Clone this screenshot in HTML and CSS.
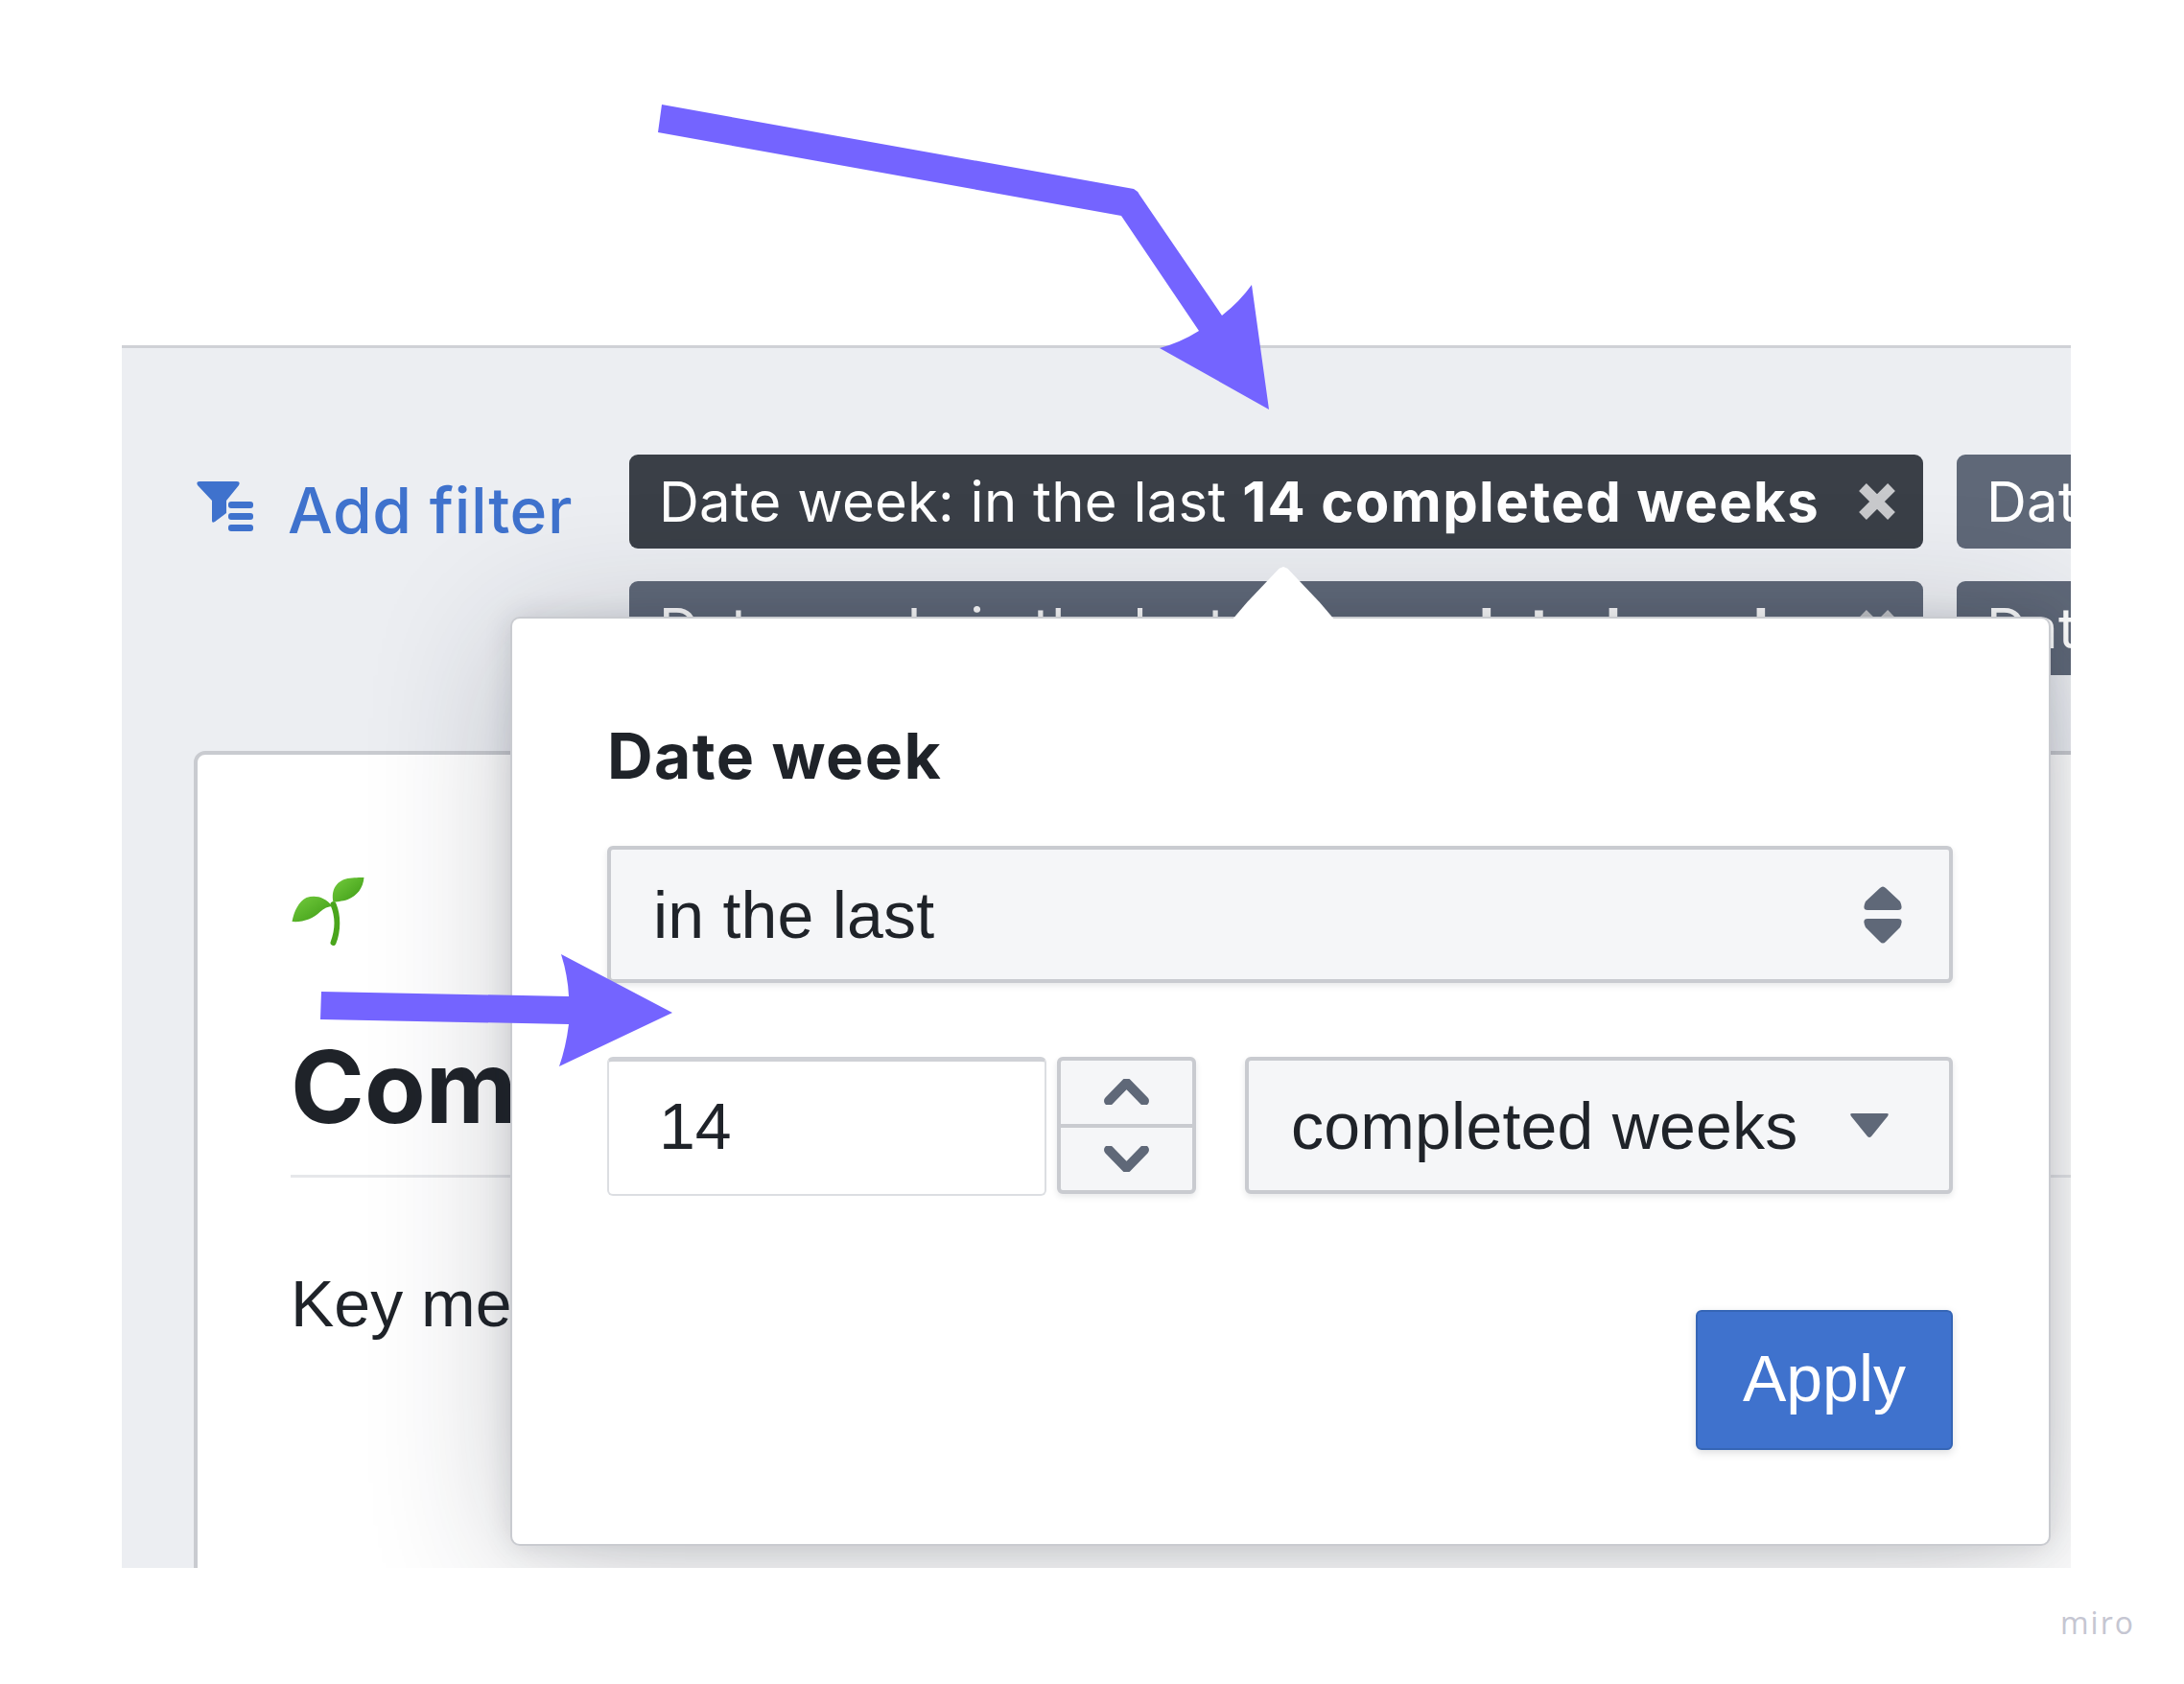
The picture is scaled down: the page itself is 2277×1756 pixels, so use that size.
FILE: index.html
```html
<!DOCTYPE html>
<html>
	<head>
		<meta charset="utf-8">
		<title>Date week filter</title>
		<link rel="stylesheet" href="styles.css">
	</head>
	<body>
		<div class="app">
			<div class="filterBar">
				<a class="addFilter" href="javascript:;">
					<svg class="filterIcon" viewBox="0 0 60 54">
						<path d="M3 0H42Q46 0 44 4L31 20V33L19 42Q16 44 16 41V20L1 4Q-1 0 3 0Z"/>
						<rect x="33" y="21" width="26" height="7" rx="3"/>
						<rect x="33" y="33" width="26" height="7" rx="3"/>
						<rect x="33" y="45" width="26" height="7" rx="3"/>
					</svg>
					<span>Add filter</span>
				</a>
				<div class="chips">
					<div class="chip chipActive">
						<span>Date week: in the last <b>14 completed weeks</b></span>
						<svg class="chipClose" viewBox="0 0 40 38"><path d="M5 4L35 34M35 4L5 34"/></svg>
					</div>
					<div class="chip"><span>Date week: in the last <b>14 completed weeks</b></span></div>
					<div class="chip">
						<span>Date week: in the last <b>14 completed weeks</b></span>
						<svg class="chipClose" viewBox="0 0 40 38"><path d="M5 4L35 34M35 4L5 34"/></svg>
					</div>
					<div class="chip"><span>Date week: in the last <b>14 completed weeks</b></span></div>
				</div>
			</div>

			<div class="card">
				<svg class="sprout" viewBox="14 15 75 71">
					<defs>
						<linearGradient id="leaf" x1="0" y1="0" x2="1" y2="1">
							<stop offset="0" stop-color="#74cc3e"/>
							<stop offset="1" stop-color="#3c9a14"/>
						</linearGradient>
					</defs>
					<path class="stem" d="M57 43C62 55 62 70 57 83"/>
					<path fill="url(#leaf)" d="M57 41C54 26 62 18 72 16C78 15 85 15 89 15C88 26 82 34 72 38C66 40 60 40 57 41Z"/>
					<path fill="url(#leaf)" d="M56 45C48 35 38 33 29 36C21 40 16 50 14 61C25 62 36 58 43 51C47 47 52 45 56 45Z"/>
				</svg>
				<h1 class="cardTitle">Comm</h1>
				<p class="cardText">Key me</p>
			</div>

			<div class="popover">
				<h2 class="popTitle">Date week</h2>
				<div class="field fieldSelect">
					<span>in the last</span>
					<svg class="sortIcon" viewBox="0 0 40 60">
						<path d="M17 2Q20 -1 23 2L38 16Q42 25 36 25H4Q-2 25 2 16Z"/>
						<path d="M4 34H36Q42 34 38 43L23 58Q20 61 17 58L2 43Q-2 34 4 34Z"/>
					</svg>
				</div>
				<div class="numRow">
					<div class="numInput">14</div>
					<div class="stepper">
						<div class="stepBtn"><svg viewBox="0 0 47 27"><path d="M5 23L23.5 4L42 23"/></svg></div>
						<div class="stepBtn"><svg viewBox="0 0 47 27"><path d="M5 4L23.5 23L42 4"/></svg></div>
					</div>
					<div class="field unitSelect">
						<span>completed weeks</span>
						<svg class="caretIcon" viewBox="0 0 40 25"><path d="M2 0H38Q41 0 39 3L22 24Q20 26 18 24L1 3Q-1 0 2 0Z"/></svg>
					</div>
				</div>
				<div class="actions">
					<button class="applyBtn">Apply</button>
				</div>
			</div>
		</div>

		<div class="footer">miro</div>

		<!-- arrows drawn on the board, over everything -->
		<svg class="arrows" viewBox="0 0 2277 1756">
			<path d="M690 109L1182 197Q1186 199 1188 203L1274 329Q1293 314 1305 297L1323 427L1209 363Q1231 357 1250 345L1169 225L686 138Z"/>
			<path d="M335 1034L593 1039Q592 1017 585 995L701 1056L583 1112Q590 1092 593 1068L334 1063Z"/>
		</svg>
	</body>
</html>
```

FILE: styles.css
```css
*{
	padding: 0px;
	margin: 0px;
	box-sizing: border-box;
}
body{
	position: relative;
	width: 2277px;
	height: 1756px;
	padding-top: 360px;
	background-color: #ffffff;
	font-family: "Liberation Sans", Arial, sans-serif;
	color: #1f2329;
	overflow: hidden;
}
.app{
	position: relative;
	width: 2032px;
	height: 1275px;
	margin-left: 127px;
	background-color: #eceef2;
	border-top: 3px solid #cfd1d6;
	overflow: hidden;
}

/* filter bar */
.filterBar{
	display: flex;
	padding: 111px 0px 0px 78px;
}
.addFilter{
	display: flex;
	flex: none;
	align-items: center;
	gap: 35px;
	width: 451px;
	height: 98px;
	padding-top: 17px;
	font-family: Inter, sans-serif;
	font-size: 66px;
	font-weight: 500;
	letter-spacing: 0.6px;
	color: #3f72cd;
	text-decoration: none;
	white-space: nowrap;
}
.filterIcon{
	width: 60px;
	height: 54px;
	flex: none;
	margin-top: -6px;
	fill: #3f72cd;
}
.chips{
	display: grid;
	flex: none;
	grid-template-columns: 1349px 1349px;
	gap: 34px 35px;
}
.chip{
	display: flex;
	align-items: center;
	justify-content: space-between;
	height: 98px;
	padding: 0px 28px 0px 31px;
	background-color: #5f6878;
	border-radius: 9px;
	font-family: Inter, sans-serif;
	font-size: 58px;
	letter-spacing: 0.25px;
	color: #ffffff;
	white-space: nowrap;
}
.chip b{
	letter-spacing: 1.4px;
}
.chipActive{
	background-color: #3a3f47;
}
.chipClose{
	width: 40px;
	height: 38px;
	fill: none;
	stroke: #c8c9cc;
	stroke-width: 11;
}

/* card under the popover */
.card{
	width: 2200px;
	height: 900px;
	margin: 79px 0px 0px 75px;
	padding: 128px 0px 0px 97px;
	background-color: #ffffff;
	border: 4px solid #c9cbd0;
	border-radius: 12px;
}
.sprout{
	display: block;
	width: 76px;
	height: 71px;
	margin-left: 1px;
}
.stem{
	fill: none;
	stroke: #4aa51c;
	stroke-width: 6;
	stroke-linecap: round;
}
.cardTitle{
	height: 155px;
	margin-top: 87px;
	font-family: Inter, sans-serif;
	font-size: 104px;
	line-height: 120px;
	font-weight: bold;
	border-bottom: 3px solid #e6e7ea;
}
.cardText{
	margin-top: 91px;
	font-size: 68px;
	line-height: 80px;
}

/* popover, sits over the bar and the card */
.popover{
	position: absolute;
	left: 407px;
	top: 282px;
	width: 1602px;
	height: 965px;
	padding: 99px 100px 0px 99px;
	background-color: #ffffff;
	border-radius: 8px;
	box-shadow: 0px 0px 0px 2px #c9cbd0, 0px 0px 30px rgba(30,35,50,0.16), 0px 20px 150px rgba(30,35,50,0.24);
}
.popover::before{
	content: "";
	position: absolute;
	left: 750px;
	top: -54px;
	width: 108px;
	height: 56px;
	background-color: #ffffff;
	clip-path: polygon(46% 3%, 50% 0%, 54% 3%, 85% 66%, 100% 100%, 0% 100%, 15% 66%);
}
.popTitle{
	height: 88px;
	font-family: Inter, sans-serif;
	font-size: 66px;
	letter-spacing: 1.4px;
	line-height: 88px;
	font-weight: bold;
}
.field{
	display: flex;
	align-items: center;
	justify-content: space-between;
	background-color: #f5f6f8;
	border: 4px solid #c9cbd0;
	border-radius: 6px;
	font-size: 68px;
	letter-spacing: 0.2px;
	box-shadow: 0px 3px 6px rgba(30,35,50,0.1);
}
.fieldSelect{
	height: 143px;
	margin-top: 50px;
	padding: 0px 49px 0px 44px;
}
.sortIcon{
	width: 40px;
	height: 60px;
	fill: #5f6878;
}
.numRow{
	display: flex;
	height: 145px;
	margin-top: 77px;
}
.numInput{
	width: 458px;
	height: 145px;
	padding-left: 52px;
	background-color: #ffffff;
	border: 2px solid #dcdee2;
	border-top: 5px solid #cfd1d6;
	border-radius: 6px;
	font-size: 68px;
	line-height: 134px;
}
.stepper{
	display: flex;
	flex-direction: column;
	width: 145px;
	height: 143px;
	margin-left: 11px;
	background-color: #f5f6f8;
	border: 4px solid #c9cbd0;
	border-radius: 6px;
	box-shadow: 0px 3px 6px rgba(30,35,50,0.1);
}
.stepBtn{
	flex: 1;
	display: flex;
	align-items: center;
	justify-content: center;
}
.stepBtn + .stepBtn{
	border-top: 4px solid #c9cbd0;
}
.stepBtn svg{
	width: 47px;
	height: 27px;
	fill: none;
	stroke: #5f6878;
	stroke-width: 10;
	stroke-linecap: round;
	stroke-linejoin: round;
}
.unitSelect{
	flex: 1;
	height: 143px;
	margin-left: 51px;
	padding: 0px 63px 0px 44px;
}
.caretIcon{
	width: 40px;
	height: 25px;
	fill: #5f6878;
}
.actions{
	display: flex;
	justify-content: flex-end;
	margin-top: 119px;
}
.applyBtn{
	width: 268px;
	height: 146px;
	padding-bottom: 4px;
	background-color: #3f72cd;
	border: 2px solid #3565b5;
	border-radius: 6px;
	font-family: "Liberation Sans", sans-serif;
	font-size: 68px;
	color: #ffffff;
	box-shadow: 0px 3px 8px rgba(30,35,50,0.15);
}

.footer{
	margin-top: 35px;
	padding-right: 51px;
	text-align: right;
	font-family: "Open Sans", sans-serif;
	font-size: 32px;
	letter-spacing: 2px;
	color: #c5c6d2;
}

.arrows{
	position: absolute;
	left: 0px;
	top: 0px;
	width: 2277px;
	height: 1756px;
	fill: #7464ff;
	pointer-events: none;
}
```
